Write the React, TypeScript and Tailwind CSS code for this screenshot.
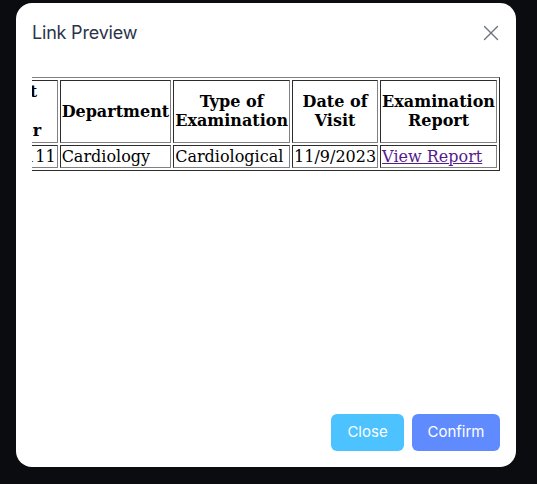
const headers = [
  ["Patient", "Reg.", "Number"],
  ["Department"],
  ["Type of", "Examination"],
  ["Date of", "Visit"],
  ["Examination", "Report"],
];

const visit = {
  patient: "2023100111",
  department: "Cardiology",
  examination: "Cardiological",
  date: "11/9/2023",
};

function CloseIcon() {
  return (
    <svg width="16" height="16" viewBox="0 0 16 16" fill="none" stroke="#6b7280" strokeWidth="1.4" strokeLinecap="round">
      <path d="M1.5 1.5 L14.5 14.5 M14.5 1.5 L1.5 14.5" />
    </svg>
  );
}

export default function App() {
  return (
    <main className="h-[484px] w-[537px] bg-[#0b0c0f] pl-4 pt-[3px]">
      <div className="flex h-[464px] w-[500px] flex-col rounded-2xl bg-white px-4 pb-4 pt-4">
        <header className="flex h-7 items-center justify-between">
          <h2 className="font-['Inter',sans-serif] text-[18px] leading-7 tracking-[-0.2px] text-[#2a3447]">
            Link Preview
          </h2>
          <button className="mr-[-1px] flex h-5 w-5 items-center justify-center">
            <CloseIcon />
          </button>
        </header>

        <div className="mt-[30px] flex justify-end overflow-hidden">
          <table className="w-min shrink-0 border-separate border-spacing-[2px] border border-[gray] [border-style:outset] font-['DejaVu_Serif',serif] text-[16px] leading-[19.5px] text-black">
            <thead>
              <tr>
                {headers.map((lines) => (
                  <th
                    className="border border-[gray] p-px text-center font-bold [border-style:inset]"
                    key={lines.join(" ")}
                  >
                    {lines.join(" ")}
                  </th>
                ))}
              </tr>
            </thead>
            <tbody>
              <tr>
                <td className="border border-[gray] p-px [border-style:inset]">{visit.patient}</td>
                <td className="border border-[gray] p-px [border-style:inset]">{visit.department}</td>
                <td className="border border-[gray] p-px [border-style:inset]">{visit.examination}</td>
                <td className="border border-[gray] p-px [border-style:inset]">{visit.date}</td>
                <td className="border border-[gray] p-px [border-style:inset]">
                  <a className="text-[#551a8b] underline" href="#report">
                    View Report
                  </a>
                </td>
              </tr>
            </tbody>
          </table>
        </div>

        <footer className="mt-auto flex justify-end gap-2 font-['Inter',sans-serif] text-[15px] text-white">
          <button className="h-[37px] w-[73px] rounded-md bg-[#4cc2ff]">Close</button>
          <button className="h-[37px] w-[88px] rounded-md bg-[#5f8bff]">Confirm</button>
        </footer>
      </div>
    </main>
  );
}
